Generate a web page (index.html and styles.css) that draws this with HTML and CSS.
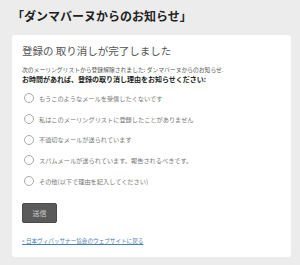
FILE: index.html
```html
<!DOCTYPE html>
<html lang="ja">
	<head>
		<meta charset="utf-8" />
		<meta name="viewport" content="width=device-width, initial-scale=1" />
		<title>登録の取り消し</title>
		<link rel="stylesheet" href="styles.css">
	</head>
	<body>
		<h1 class="site">「ダンマバーヌからのお知らせ」</h1>
		<div class="card">
			<h2>登録の 取り消しが完了しました</h2>
			<p class="note">次のメーリングリストから登録解除されました: ダンマバーヌからのお知らせ.</p>
			<p class="ask">お時間があれば、登録の取り消し理由をお知らせください:</p>
			<form class="reasons">
				<label><span class="radio"></span>もうこのようなメールを受信したくないです</label>
				<label><span class="radio"></span>私はこのメーリングリストに登録したことがありません</label>
				<label><span class="radio"></span>不適切なメールが送られています</label>
				<label><span class="radio"></span>スパムメールが送られています。報告されるべきです。</label>
				<label><span class="radio"></span>その他(以下で理由を記入してください)</label>
				<button type="button">送信</button>
			</form>
			<a class="back" href="#">« 日本ヴィパッサナー協会のウェブサイトに戻る</a>
		</div>
	</body>
</html>
```

FILE: styles.css
```css
* {
	margin: 0;
	padding: 0;
	box-sizing: border-box;
}

body {
	background: #ececec;
	color: #444;
	font-family: "Noto Sans CJK JP", "Noto Sans", sans-serif;
	padding: 8px 9px 0 12px;
}

h1.site {
	font-size: 12px;
	font-weight: bold;
	color: #222;
	line-height: 16px;
	height: 27px;
}

.card {
	background: #fff;
	border-radius: 3px;
	padding: 9px 11px 8px 10px;
	height: 222px;
}

.card h2 {
	font-size: 10.5px;
	font-weight: normal;
	color: #555;
	line-height: 14px;
	margin-bottom: 7px;
}

.note {
	font-size: 5.8px;
	color: #555;
	line-height: 9px;
}

.ask {
	font-size: 7px;
	font-weight: bold;
	color: #222;
	line-height: 11px;
	margin-bottom: 3px;
}

.reasons {
	display: flex;
	flex-direction: column;
	align-items: flex-start;
}

.reasons label {
	display: flex;
	align-items: center;
	gap: 5px;
	height: 20.7px;
	padding-left: 2px;
	font-size: 6.2px;
	color: #777;
}

.radio {
	width: 10px;
	height: 10px;
	border: 1px solid #aaa;
	border-radius: 50%;
	background: #fff;
}

.reasons button {
	margin-top: 11.5px;
	width: 35px;
	height: 20px;
	background: #5a5a5a;
	border: 1px solid #4a4a4a;
	border-radius: 2px;
	color: #ccc;
	font-family: inherit;
	font-size: 7px;
}

.back {
	display: block;
	margin-top: 14px;
	font-size: 5.6px;
	line-height: 9px;
	color: #4a7fb5;
	text-decoration: underline;
}
```
